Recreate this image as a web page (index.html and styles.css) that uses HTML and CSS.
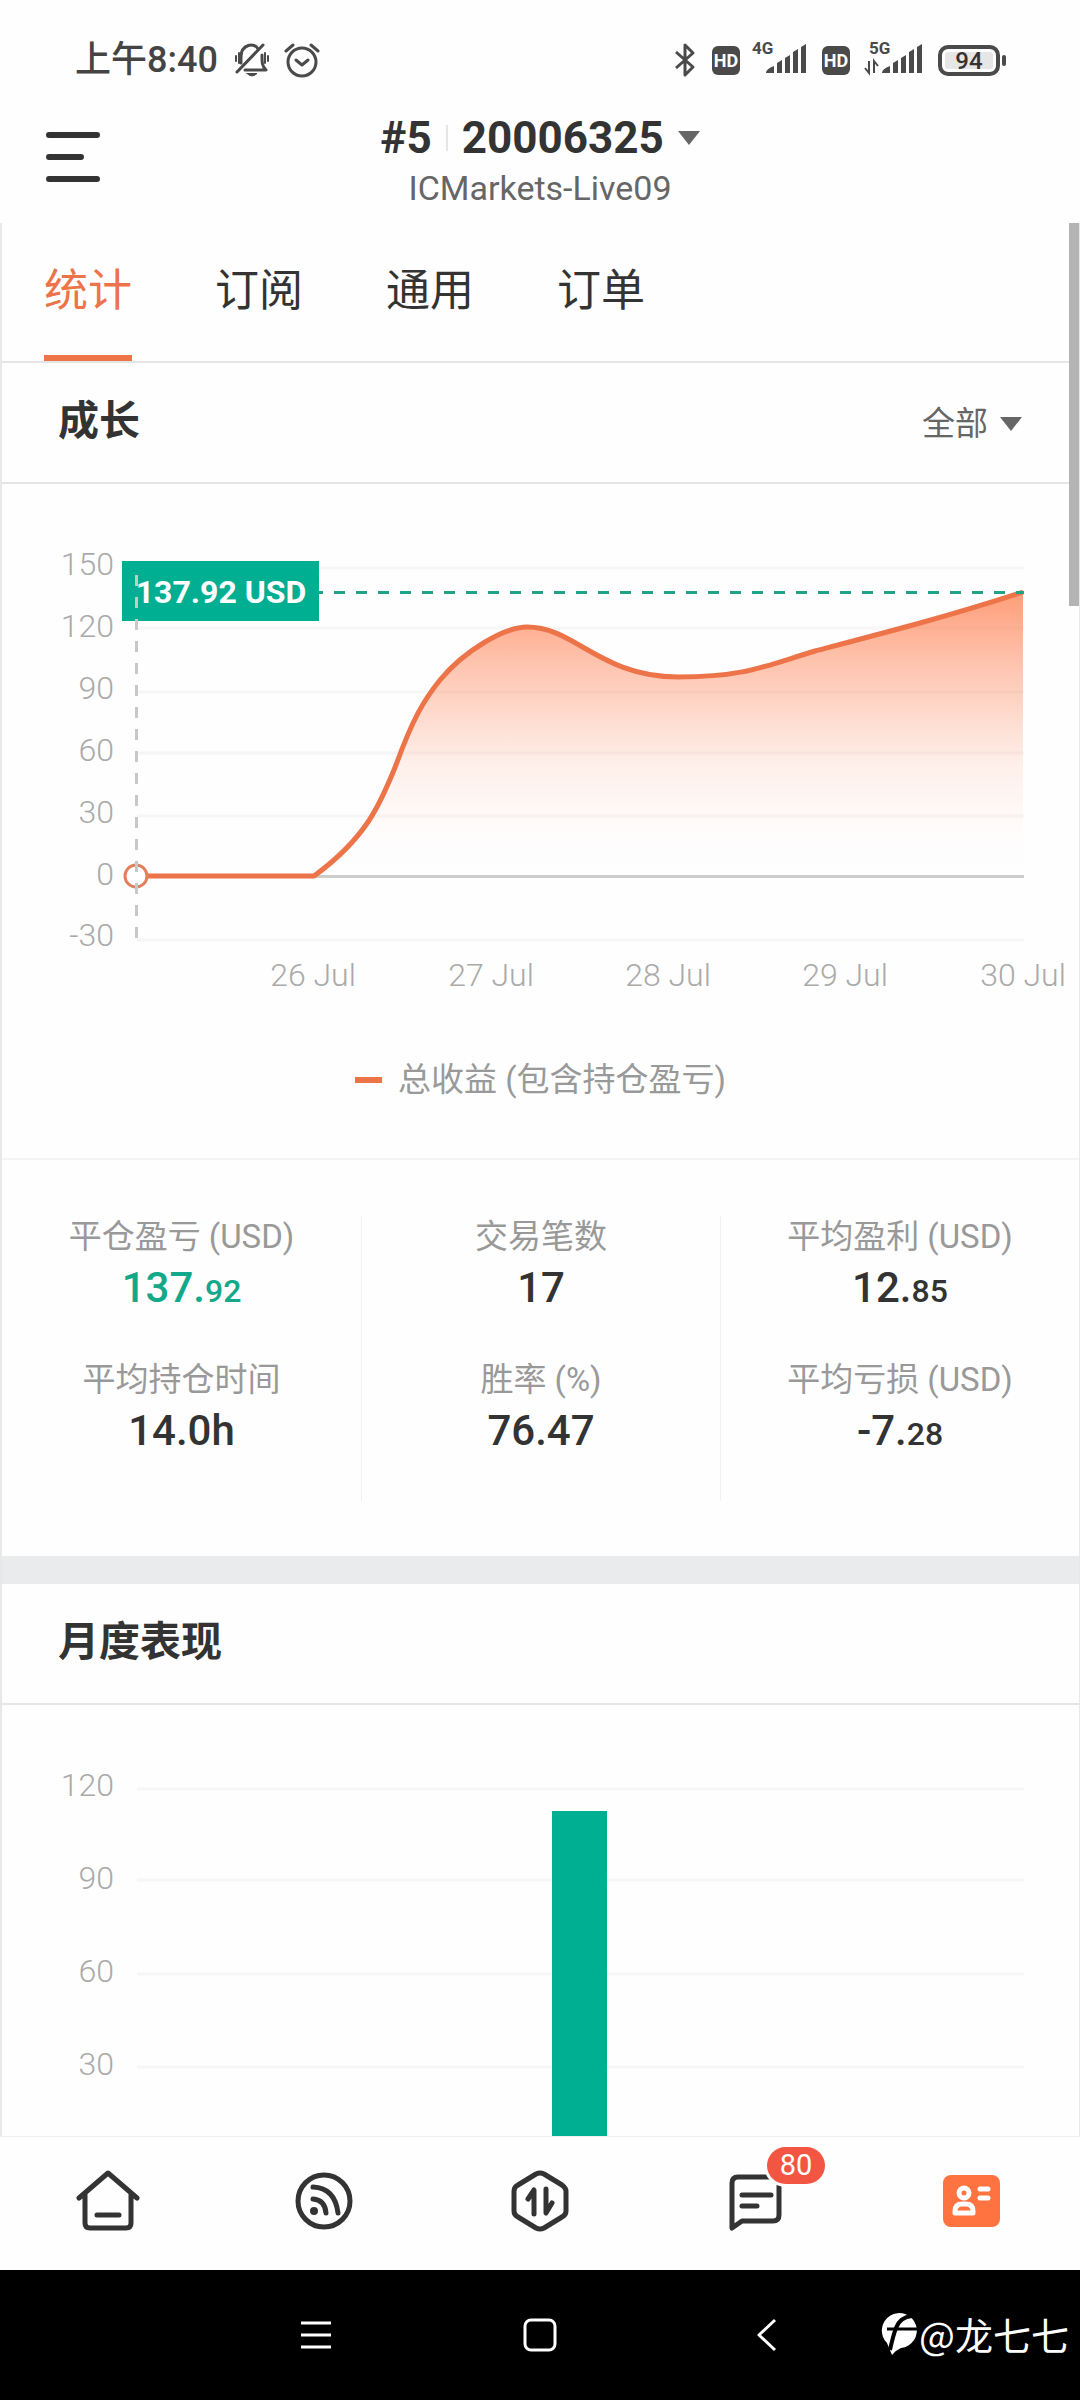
FILE: index.html
```html
<!DOCTYPE html>
<html lang="zh-CN">
<head>
<meta charset="utf-8">
<meta name="viewport" content="width=device-width, initial-scale=1">
<title>20006325 ICMarkets-Live09</title>
<link rel="stylesheet" href="styles.css">
</head>
<body>
<div class="app">
  <div class="status">
    <div class="status-side">
      <span class="clock">上午8:40</span>
      <svg class="ic-bell" width="36" height="36" viewBox="0 0 36 36" fill="none" stroke="#4a4a4a" stroke-width="3" stroke-linecap="round" stroke-linejoin="round">
        <path d="M7 21V15C7 2 21 0 24 7M28 13c0 8 0 11 4 15H11"/>
        <path d="M3 30L29 3"/>
        <path d="M2 14v5M5 11v10M31 11v10M34 14v5" stroke-width="2"/>
        <path d="M13 31.500h10q-5 5-10 0z" fill="#4a4a4a" stroke-width="1"/>
      </svg>
      <svg width="36" height="36" viewBox="0 0 36 36" fill="none" stroke="#4a4a4a" stroke-width="3" stroke-linecap="round" stroke-linejoin="round">
        <circle cx="18" cy="20" r="14"/><path d="M12 18l6 5 6-5M2 9l7-6M34 9l-7-6"/>
      </svg>
    </div>
    <div class="status-side right">
      <svg width="22" height="36" viewBox="0 0 22 36" fill="none" stroke="#4a4a4a" stroke-width="3" stroke-linejoin="round">
        <path d="M2 10l17 15-8 8V3l8 8L2 26"/>
      </svg>
      <span class="hd">HD</span>
      <svg class="signal" width="54" height="48" viewBox="0 -6 54 48" fill="#4a4a4a">
        <text x="0" y="12" class="net">4G</text>
        <path d="M14 31q0-4 8-7v7zM25 21l5-3v13h-5zM33 16l5-3v18h-5zM41 10l5-3v24h-5zM49 5l5-3v29h-5z"/>
      </svg>
      <span class="hd">HD</span>
      <svg class="signal" width="60" height="48" viewBox="0 -6 60 48" fill="#4a4a4a">
        <text x="7" y="12" class="net">5G</text>
        <path d="M20 31q0-4 8-7v7zM31 21l5-3v13h-5zM39 16l5-3v18h-5zM47 10l5-3v24h-5zM55 5l5-3v29h-5z"/>
        <path d="M7 19v12l-4-5M12 31V19l4 5" fill="none" stroke="#4a4a4a" stroke-width="2"/>
      </svg>
      <span class="battery">94</span>
    </div>
  </div>

  <header class="head">
    <button class="menu" aria-label="菜单">
      <svg width="56" height="52" viewBox="0 0 56 52" stroke="#333" stroke-width="6" stroke-linecap="round"><path d="M4 4h48M4 26h32M4 48h48"/></svg>
    </button>
    <button class="account">
      <span class="account-id">#5<i class="bar"></i>20006325<svg class="caret" width="22" height="14" viewBox="0 0 22 14"><path d="M0 0h22L11 14z" fill="#666"/></svg></span>
      <span class="account-server">ICMarkets-Live09</span>
    </button>
  </header>

  <main class="content">
    <div class="thumb"></div>
    <nav class="tabs">
      <button class="tab active">统计</button>
      <button class="tab">订阅</button>
      <button class="tab">通用</button>
      <button class="tab">订单</button>
    </nav>

    <section>
      <div class="sec-head">
        <h2>成长</h2>
        <label class="range">
          <select aria-label="时间范围"><option>全部</option></select>
          <svg width="22" height="14" viewBox="0 0 22 14"><path d="M0 0h22L11 14z" fill="#666"/></svg>
        </label>
      </div>
      <svg class="chart" viewBox="0 0 1077 526">
        <defs>
          <linearGradient id="area" x1="0" y1="108" x2="0" y2="393" gradientUnits="userSpaceOnUse">
            <stop offset="0" stop-color="#ff7340" stop-opacity="0.7"/>
            <stop offset="0.25" stop-color="#ff7340" stop-opacity="0.42"/>
            <stop offset="0.6" stop-color="#ff7340" stop-opacity="0.11"/>
            <stop offset="0.85" stop-color="#ff7340" stop-opacity="0.01"/>
            <stop offset="1" stop-color="#ff7340" stop-opacity="0"/>
          </linearGradient>
        </defs>
        <path class="grid" d="M135 84H1022M135 144H1022M135 208H1022M135 269H1022M135 332H1022M135 456H1022"/>
        <path d="M135 392.500H1022" stroke="#ccc" stroke-width="3"/>
        <g class="axis y">
          <text x="112" y="91">150</text><text x="112" y="153">120</text><text x="112" y="215">90</text>
          <text x="112" y="277">60</text><text x="112" y="339">30</text><text x="112" y="401">0</text><text x="112" y="462">-30</text>
        </g>
        <g class="axis x">
          <text x="311" y="502">26 Jul</text><text x="489" y="502">27 Jul</text><text x="666" y="502">28 Jul</text>
          <text x="843" y="502">29 Jul</text><text x="1021" y="502">30 Jul</text>
        </g>
        <path fill="url(#area)" d="M312 392C364 354 378 321 394 281C411 234 422 216 438 196C463 166 503 143 525 143C573 143 598 193 676 193C743 193 763 182 813 167C878 150 948 132 1021 108V392z"/>
        <path fill="none" stroke="#ed7349" stroke-width="5" stroke-linejoin="round" d="M135 392H312C364 354 378 321 394 281C411 234 422 216 438 196C463 166 503 143 525 143C573 143 598 193 676 193C743 193 763 182 813 167C878 150 948 132 1021 108"/>
        <path d="M310 108.500H1022" stroke="#1fa287" stroke-width="3" stroke-dasharray="11 11"/>
        <rect x="120" y="77" width="197" height="60" fill="#00af92"/>
        <text class="tag" x="219" y="119">137.92 USD</text>
        <circle cx="134" cy="392" r="11" fill="#fff" stroke="#e0805c" stroke-width="3"/>
        <path d="M134.500 91V456" stroke="#c8c8c8" stroke-width="3" stroke-dasharray="11 11"/>
      </svg>
      <p class="legend"><i></i>总收益 (包含持仓盈亏)</p>
      <div class="stats">
        <dl>
          <dt>平仓盈亏 (USD)</dt><dd class="gain">137.<small>92</small></dd>
          <dt>平均持仓时间</dt><dd>14.0h</dd>
        </dl>
        <dl>
          <dt>交易笔数</dt><dd>17</dd>
          <dt>胜率 (%)</dt><dd>76.47</dd>
        </dl>
        <dl>
          <dt>平均盈利 (USD)</dt><dd>12.<small>85</small></dd>
          <dt>平均亏损 (USD)</dt><dd>-7.<small>28</small></dd>
        </dl>
      </div>
    </section>

    <section class="monthly">
      <div class="sec-head"><h2>月度表现</h2></div>
      <svg class="chart" viewBox="0 0 1077 431">
        <path class="grid" d="M135 84H1022M135 175H1022M135 269H1022M135 362H1022"/>
        <g class="axis y">
          <text x="112" y="91">120</text><text x="112" y="184">90</text><text x="112" y="277">60</text><text x="112" y="370">30</text>
        </g>
        <rect x="550" y="106" width="55" height="325" fill="#00af92"/>
      </svg>
    </section>
  </main>

  <nav class="tabbar">
    <a href="#home" aria-label="首页">
      <svg width="64" height="64" viewBox="0 0 64 64"><path d="M3 29L32 4l29 25M9 25v29q0 5 5 5h36q5 0 5-5V25M21 46h22"/></svg>
    </a>
    <a href="#feed" aria-label="动态">
      <svg width="64" height="64" viewBox="0 0 64 64"><circle cx="32" cy="32" r="26"/><path d="M21 18q22 1 25 26M21 30q12 1 13 14"/><circle cx="22" cy="42" r="4" class="solid"/></svg>
    </a>
    <a href="#trade" aria-label="交易">
      <svg width="64" height="64" viewBox="0 0 64 64"><path d="M28 5q4-2 8 0l18 11q4 3 4 6v20q0 4-4 6L36 59q-4 2-8 0L10 48q-4-2-4-6V22q0-4 4-6zM20 30l6-9v24M44 34l-6 10V20"/></svg>
    </a>
    <a href="#messages" aria-label="消息">
      <svg width="64" height="64" viewBox="0 0 64 64"><path d="M55 16v30q0 6-6 6H18L8 59V14q0-6 6-6h36M18 26h29M18 37h15"/></svg>
      <span class="badge">80</span>
    </a>
    <a href="#account" aria-label="账户">
      <svg width="64" height="64" viewBox="0 0 64 64"><rect x="3" y="6" width="57" height="52" rx="8" fill="#ff7340" stroke="none"/><g stroke="#fff" stroke-width="5"><circle cx="24" cy="24" r="5"/><path d="M15 44v-2q0-7 7-7h4q7 0 7 7v2zM40 20h8M40 29h8"/></g></svg>
    </a>
  </nav>

  <div class="sysbar">
    <svg width="32" height="32" viewBox="0 0 32 32"><path d="M1 4h30M1 16h30M1 28h30"/></svg>
    <svg width="34" height="34" viewBox="0 0 34 34"><rect x="2" y="2" width="30" height="30" rx="6"/></svg>
    <svg width="32" height="34" viewBox="0 0 32 34"><path d="M27 2L11 17l16 15"/></svg>
    <div class="mark">
      <svg width="36" height="44" viewBox="0 0 36 44"><path d="M6 31A17.500 17.500 0 1 1 20 36Q15 38 11 43z" fill="#fff" stroke="none"/><path d="M9 38Q12 24 15 16Q19 5 31 4" stroke="#000" stroke-width="4"/><path d="M6 17H36" stroke="#000" stroke-width="3"/></svg>
      <span>@龙七七</span>
    </div>
  </div>
</div>
</body>
</html>
```
FILE: styles.css
```css
* { box-sizing: border-box; margin: 0; padding: 0; }
body { font-family: Roboto, "Noto Sans CJK SC", sans-serif; color: #333; background: #fefefe; }
button, select { font: inherit; color: inherit; background: none; border: 0; }
svg { display: block; flex: none; }
.app { display: flex; flex-direction: column; height: 100vh; overflow: hidden; }

.status { display: flex; justify-content: space-between; align-items: center; padding: 36px 80px 0 75px; height: 84px; }
.status-side { display: flex; align-items: center; gap: 14px; }
.right { gap: 16px; }
.clock { font-size: 36px; line-height: 48px; font-weight: 500; color: #444; }
.ic-bell { margin-left: 2px; }
.hd { width: 28px; height: 29px; border-radius: 6px; background: #4a4a4a; color: #fefefe; font-size: 18px; line-height: 30px; font-weight: 700; text-align: center; }
.status-side .signal { margin-left: -4px; }
.net { font-size: 17px; font-weight: 700; }
.battery { position: relative; width: 62px; height: 31px; border: 4px solid #4a4a4a; border-radius: 10px; background: #e6e6e6; box-shadow: inset 0 0 0 3px #fefefe; font-size: 24px; line-height: 25px; font-weight: 500; text-align: center; }
.battery::after { content: ""; position: absolute; right: -10px; top: 6px; width: 4px; height: 11px; border-radius: 2px; background: #4a4a4a; }

.head { display: grid; grid-template-columns: 1fr auto 1fr; align-items: start; height: 139px; padding: 28px 45px 0; flex: none; }
.menu { justify-self: start; padding-top: 19px; }
.account { display: flex; flex-direction: column; align-items: center; gap: 4px; }
.account-id { display: flex; align-items: center; font-size: 44px; line-height: 52px; font-weight: 700; }
.bar { width: 2px; height: 26px; margin: 0 14px; background: #e5e5e5; }
.caret { margin-left: 14px; }
.account-server { font-size: 34px; line-height: 40px; color: #666; }

.content { position: relative; flex: 1; min-height: 0; overflow: hidden; border-left: 2px solid #e8e8e8; border-right: 1px solid #e8e8e8; }
.thumb { position: absolute; top: 0; right: 0; width: 10px; height: 20%; background: #b4b4b4; z-index: 1; }
.tabs { display: flex; gap: 83px; height: 140px; padding-left: 42px; border-bottom: 2px solid #e5e5e5; }
.tab { font-size: 44px; line-height: 64px; padding-top: 4px; border-bottom: 6px solid transparent; }
.active { color: #ed7349; border-color: #ed7349; }

.sec-head { display: flex; justify-content: space-between; align-items: baseline; height: 121px; padding: 28px 57px 0 56px; border-bottom: 2px solid #e5e5e5; }
h2 { font-size: 41px; line-height: 60px; font-weight: 700; }
.range { display: flex; align-items: center; gap: 12px; font-size: 33px; color: #666; }
.range select { appearance: none; }
.chart { width: 100%; height: auto; }
.grid { stroke: #f6f6f6; stroke-width: 3; }
.axis { font-size: 32px; font-weight: 300; fill: #aaa; }
.y { text-anchor: end; }
.x { text-anchor: middle; }
.tag { font-size: 32px; font-weight: 700; fill: #fff; text-anchor: middle; }
.legend { display: flex; justify-content: center; align-items: center; gap: 16px; padding: 50px 0 58px; font-size: 33px; line-height: 40px; color: #999; border-bottom: 2px solid #f4f4f4; }
.legend i { width: 27px; height: 6px; background: #ed7349; }

.stats { display: grid; grid-template-columns: repeat(3, 1fr); padding: 56px 0 55px; }
dl { height: 285px; text-align: center; }
dl + dl { border-left: 1px solid #f0f0f0; }
dt { font-size: 33px; line-height: 42px; color: #999; }
dd { height: 60px; font-size: 42px; line-height: 60px; font-weight: 500; }
dd + dt { margin-top: 41px; }
small { font-size: 32px; line-height: 40px; }
.gain { color: #14a88b; }
.monthly { border-top: 28px solid #eaebed; }

.tabbar { display: grid; grid-template-columns: repeat(5, 1fr); align-items: center; height: 134px; padding-bottom: 5px; border-top: 1px solid #eee; flex: none; }
.tabbar a { position: relative; justify-self: center; }
.tabbar svg { fill: none; stroke: #333; stroke-width: 5; stroke-linecap: round; stroke-linejoin: round; }
.tabbar .solid { fill: #333; stroke: none; }
.badge { position: absolute; left: 43px; top: -22px; width: 58px; height: 37px; border-radius: 19px; background: #f25643; color: #fff; font-size: 29px; line-height: 37px; text-align: center; box-shadow: 0 0 0 3px #fefefe; }

.sysbar { position: relative; display: flex; justify-content: center; align-items: center; gap: 191px; height: 130px; background: #000; flex: none; }
.sysbar svg { fill: none; stroke: #fff; stroke-width: 3; stroke-linejoin: round; }
.mark { position: absolute; right: 11px; top: 36px; display: flex; align-items: center; gap: 2px; color: #fff; font-family: "Noto Sans CJK SC", sans-serif; font-size: 38px; line-height: 56px; }
```
